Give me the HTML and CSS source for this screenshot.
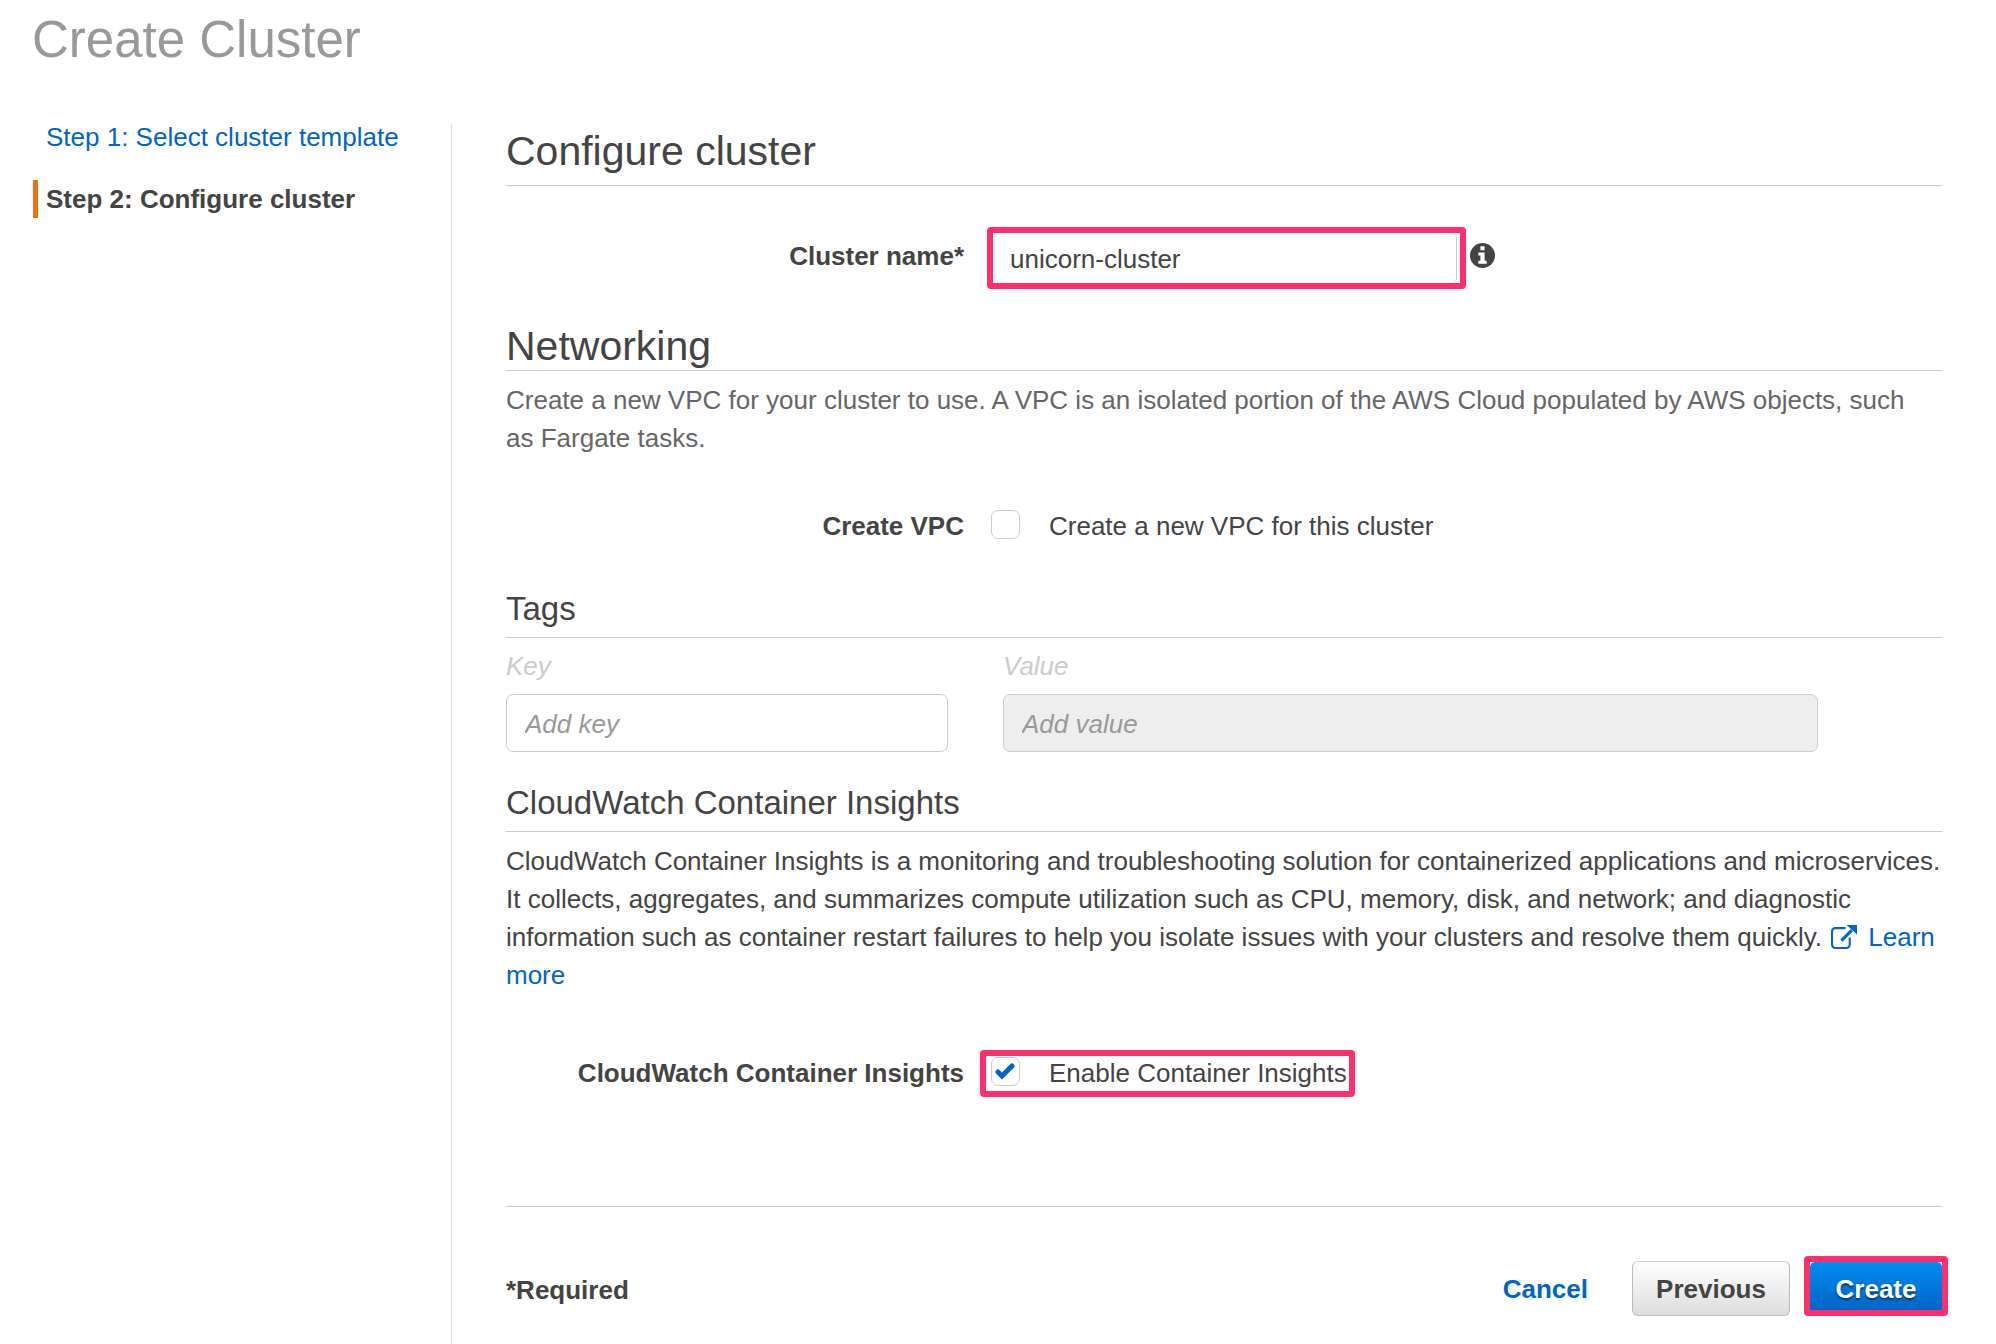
FILE: index.html
```html
<!DOCTYPE html>
<html lang="en">
<head>
<meta charset="utf-8">
<title>Create Cluster</title>
<link rel="stylesheet" href="styles.css">
</head>
<body>
<h1 class="page-title">Create Cluster</h1>
<div class="layout">
  <nav class="steps" aria-label="Steps">
    <a class="step" href="#template">Step 1: Select cluster template</a>
    <span class="step step-current" aria-current="step">Step 2: Configure cluster</span>
  </nav>
  <main class="content">
    <form class="form">
      <h2 class="heading heading-first">Configure cluster</h2>
      <div class="row row-name">
        <label class="row-label" for="name">Cluster name*</label>
        <div class="name-field">
          <div class="highlight">
            <input class="name-input" id="name" type="text" value="unicorn-cluster">
          </div>
          <svg class="info" viewBox="0 0 24 24" role="img" aria-label="Info">
            <circle cx="12" cy="12" r="12" fill="#444"/>
            <path fill="#fff" d="M10 3h4v4h-4zM8 9h6v8h2v3H8v-3h2v-5H8z"/>
          </svg>
        </div>
      </div>

      <h2 class="heading heading-tight">Networking</h2>
      <p class="text text-muted">Create a new VPC for your cluster to use. A VPC is an isolated portion of the AWS Cloud populated by AWS objects, such as Fargate tasks.</p>
      <div class="row row-vpc">
        <span class="row-label">Create VPC</span>
        <label class="check">
          <span class="check-box"><input class="check-input" type="checkbox"></span>
          Create a new VPC for this cluster
        </label>
      </div>

      <h3 class="subheading">Tags</h3>
      <div class="tags">
        <div class="tag-field">
          <label class="tag-label" for="key">Key</label>
          <input class="tag-input" id="key" type="text" placeholder="Add key">
        </div>
        <div class="tag-field">
          <label class="tag-label" for="value">Value</label>
          <input class="tag-input" id="value" type="text" placeholder="Add value" disabled>
        </div>
      </div>

      <h3 class="subheading">CloudWatch Container Insights</h3>
      <p class="text">CloudWatch Container Insights is a monitoring and troubleshooting solution for containerized applications and microservices. It collects, aggregates, and summarizes compute utilization such as CPU, memory, disk, and network; and diagnostic information such as container restart failures to help you isolate issues with your clusters and resolve them quickly. <a class="learn" href="#learn"><svg class="external" viewBox="0 0 25 23" aria-hidden="true"><path fill="none" stroke="currentColor" stroke-width="2" d="M14 3H4a3 3 0 0 0-3 3v13a3 3 0 0 0 3 3h11a3 3 0 0 0 3-3v-7"/><path fill="none" stroke="currentColor" stroke-width="3" d="M10 15L20 5"/><path fill="currentColor" d="M15 0h10v9z"/></svg>Learn more</a></p>
      <div class="row row-insights">
        <span class="row-label">CloudWatch Container Insights</span>
        <label class="check highlight check-highlight">
          <span class="check-box"><input class="check-input" type="checkbox" checked><svg class="tick" viewBox="0 0 20 18" aria-hidden="true"><path fill="none" stroke="#0066c6" stroke-width="5" stroke-linecap="round" d="M3 10l4 4L17 4"/></svg></span>
          Enable Container Insights
        </label>
      </div>

      <div class="footer">
        <span class="required">*Required</span>
        <a class="cancel" href="#cancel">Cancel</a>
        <button class="button" type="button">Previous</button>
        <div class="highlight button-highlight">
          <button class="button button-primary" type="button">Create</button>
        </div>
      </div>
    </form>
  </main>
</div>
</body>
</html>
```
FILE: styles.css
```css
* {
  box-sizing: border-box;
}

body {
  display: flex;
  flex-direction: column;
  min-height: 100vh;
  margin: 0;
  background: #fff;
  color: #444;
  font: 26px/38px "Liberation Sans", Arial, sans-serif;
}

a {
  color: #0066c6;
  text-decoration: none;
}

input,
button {
  font: inherit;
  color: inherit;
}

h1, h2, h3, p {
  margin: 0;
  font-weight: 400;
}

.page-title {
  padding: 10px 32px 0;
  color: #999;
  font-size: 51px;
  line-height: 60px;
}

.layout {
  display: flex;
  flex: 1;
  padding-top: 48px;
}

.steps {
  display: flex;
  flex-direction: column;
  flex: 0 0 451px;
  gap: 24px;
  padding-left: 33px;
}

.step {
  padding-left: 13px;
}

.step-current {
  padding-left: 8px;
  border-left: 5px solid #ec7211;
  font-weight: 700;
}

.content {
  flex: 1;
  min-width: 0;
  margin-top: 6px;
  padding: 7px 54px 28px;
  border-left: 1px solid #ddd;
}

.heading {
  border-bottom: 1px solid #ccc;
  font-size: 41px;
  line-height: 40px;
}

.heading-first {
  padding-bottom: 14px;
}

.heading-tight {
  padding-bottom: 4px;
}

.subheading {
  padding-bottom: 8px;
  border-bottom: 1px solid #ccc;
  font-size: 33px;
  line-height: 40px;
}

.text {
  padding-top: 10px;
}

.text-muted {
  padding-right: 36px;
  color: #666;
}

.row {
  display: grid;
  grid-template-columns: 458px 1fr;
  column-gap: 16px;
}

.row-label {
  text-align: right;
  font-weight: 700;
}

.row-name {
  margin: 41px 0 37px;
}

.row-name .row-label {
  padding-top: 10px;
}

.name-field {
  display: flex;
  padding-left: 7px;
}

.highlight {
  border: 6px solid #ff2f6d;
  border-radius: 4px;
}

.name-input {
  display: block;
  width: 464px;
  height: 50px;
  margin-right: 3px;
  padding: 2px 17px 0;
  border: 0;
  border-right: 1px solid #ccc;
  border-radius: 0 5px 5px 0;
  background: #fff;
}

.info {
  width: 25px;
  height: 25px;
  margin: 16px 0 0 4px;
}

.row-vpc {
  margin: 50px 0 44px;
}

.check {
  display: flex;
  gap: 29px;
  padding-left: 11px;
}

.check-box {
  position: relative;
  width: 29px;
  height: 29px;
  margin-top: 3px;
}

.check-input {
  display: block;
  width: 29px;
  height: 29px;
  margin: 0;
  border: 1px solid #ccc;
  border-radius: 7px;
  background: #fff;
  appearance: none;
}

.tick {
  position: absolute;
  top: 5px;
  left: 4px;
  width: 20px;
  height: 18px;
}

.row-insights {
  margin: 56px 0 109px;
  line-height: 34px;
}

.row-insights .row-label {
  padding-top: 6px;
}

.check-highlight {
  justify-self: start;
  height: 47px;
  padding: 0 2px 0 5px;
}

.check-highlight .check-box {
  margin-top: 1px;
}

.tags {
  display: grid;
  grid-template-columns: 442fr 815fr;
  column-gap: 55px;
  margin-bottom: 31px;
  padding: 9px 124px 0 0;
}

.tag-field {
  display: flex;
  flex-direction: column;
  gap: 9px;
}

.tag-label {
  color: #ccc;
  font-style: italic;
}

.tag-input {
  width: 100%;
  height: 58px;
  padding: 2px 18px 0;
  border: 1px solid #ccc;
  border-radius: 7px;
  background: #fff;
}

.tag-input:disabled {
  background: #eee;
}

.tag-input::placeholder {
  color: #999;
  font-style: italic;
}

.external {
  width: 26px;
  height: 24px;
  margin: 0 11px 0 2px;
  vertical-align: -3px;
}

.footer {
  display: flex;
  align-items: flex-start;
  padding-top: 54px;
  border-top: 1px solid #ccc;
}

.required {
  flex: 1;
  padding-top: 10px;
  font-weight: 700;
}

.cancel {
  margin-right: 44px;
  padding-top: 9px;
  font-weight: 700;
}

.button {
  width: 158px;
  height: 55px;
  padding: 0;
  border: 1px solid #bbb;
  border-top-color: #ccc;
  border-radius: 6px;
  background: linear-gradient(#fff, #ddd);
  font-weight: 700;
}

.button-highlight {
  margin: -5px -6px 0 14px;
}

.button-primary {
  display: block;
  width: 132px;
  height: 48px;
  padding-top: 6px;
  border: 0;
  border-radius: 5px 5px 0 0;
  background: linear-gradient(#008cf0, #0066c6);
  color: #fff;
  text-shadow: 0 2px 2px rgba(0, 0, 0, 0.5);
}
```
